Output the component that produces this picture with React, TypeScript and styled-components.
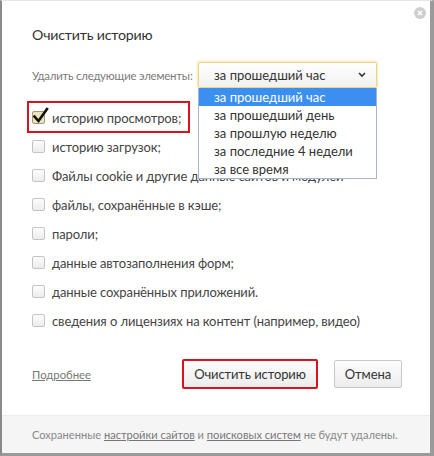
import React from "react";
import styled, { createGlobalStyle } from "styled-components";

const Global = createGlobalStyle`
  html, body { margin: 0; padding: 0; background: #fff; }
  body { font-family: Lato, "Open Sans", sans-serif; white-space: nowrap; }
  * { box-sizing: border-box; }
`;

const Window = styled.div`
  width: 434px;
  height: 456px;
  display: flex;
  flex-direction: column;
  background: #fff;
  border-left: 2px solid #8a8a8a;
  border-right: 4px solid #9a9a9a;
  border-bottom: 3px solid #9a9a9a;
  border-top: 1px solid #e6e6e6;
`;

const Content = styled.div`
  position: relative;
  flex: 1;
  padding: 24px 28px 0 30px;
  display: flex;
  flex-direction: column;
`;

const Close = styled.div`
  position: absolute;
  top: 6px;
  right: 4px;
  width: 12px;
  height: 12px;
  border-radius: 50%;
  background: #cfcfcf;
  display: flex;
  align-items: center;
  justify-content: center;
`;

const Title = styled.div`
  font-size: 14.2px;
  letter-spacing: -0.2px;
  line-height: 20px;
  color: #333;
`;

const SelectRow = styled.div`
  margin-top: 17px;
  display: flex;
  align-items: center;
  height: 26px;
`;

const Label = styled.div`
  font-size: 11.4px;
  letter-spacing: -0.2px;
  color: #7a7a7a;
  width: 166px;
`;

const SelectWrap = styled.div`
  position: relative;
  width: 179px;
  height: 26px;
`;

const SelectBox = styled.div`
  height: 26px;
  border: 1px solid #ecd58a;
  box-shadow: 0 0 2px 1px #f7e7b0;
  border-radius: 2px;
  background: linear-gradient(#ffffff, #f1f1f1);
  display: flex;
  align-items: center;
  justify-content: space-between;
  padding: 0 10px 0 15px;
  font-size: 13px;
  color: #333;
`;

const Dropdown = styled.ul`
  position: absolute;
  top: 26px;
  left: 0;
  width: 179px;
  margin: 0;
  padding: 0;
  list-style: none;
  background: #fff;
  border: 1px solid #a7b3cf;
  border-top: none;
  z-index: 2;
`;

const Option = styled.li<{ $active?: boolean }>`
  height: 18px;
  line-height: 18px;
  padding-left: 15px;
  font-size: 13px;
  color: ${(p) => (p.$active ? "#fff" : "#333")};
  background: ${(p) => (p.$active ? "#3b8ff0" : "transparent")};
`;

const List = styled.div`
  margin-top: 15px;
  display: flex;
  flex-direction: column;
`;

const Row = styled.label<{ $marked?: boolean }>`
  position: relative;
  height: 29px;
  display: flex;
  align-items: center;
  align-self: flex-start;
  gap: 7px;
  font-size: 13px;
  letter-spacing: -0.1px;
  color: #444;
  &::after {
    content: "";
    display: ${(p) => (p.$marked ? "block" : "none")};
    position: absolute;
    left: -5px;
    right: -9px;
    top: -2px;
    bottom: -1px;
    border: 2px solid #d8131c;
  }
`;

const Box = styled.span<{ $checked?: boolean }>`
  position: relative;
  width: 13px;
  height: 13px;
  flex: none;
  border: 1px solid ${(p) => (p.$checked ? "#a89a70" : "#c4c4c4")};
  border-radius: 2px;
  background: ${(p) =>
    p.$checked ? "#ece2bf" : "linear-gradient(#fdfdfd, #ececec)"};
  svg {
    position: absolute;
    left: -1px;
    top: -5px;
  }
`;

const Actions = styled.div`
  margin-top: 24px;
  display: flex;
  align-items: center;
  height: 30px;
`;

const More = styled.a`
  font-size: 11.3px;
  color: #777;
  text-decoration: underline;
  flex: 1;
`;

const Button = styled.button<{ $marked?: boolean }>`
  height: ${(p) => (p.$marked ? "30px" : "28px")};
  padding: 0 10px;
  font-family: inherit;
  font-size: 13px;
  letter-spacing: -0.1px;
  color: #333;
  background: linear-gradient(#fdfdfd, #ececec);
  border: ${(p) => (p.$marked ? "2px solid #d8131c" : "1px solid #c8c8c8")};
  border-radius: 2px;
  margin-left: ${(p) => (p.$marked ? "0" : "16px")};
`;

const Footer = styled.div`
  height: 38px;
  background: #f5f5f5;
  border-top: 1px solid #ececec;
  display: flex;
  align-items: center;
  padding-left: 30px;
  font-size: 11.1px;
  color: #888;
  a {
    color: #777;
    text-decoration: underline;
  }
`;

const Check = () => (
  <svg width="18" height="18" viewBox="0 0 18 18">
    <path
      d="M2.5 9.5 L6.5 14 L15 2"
      fill="none"
      stroke="#111"
      strokeWidth="2.6"
      strokeLinecap="square"
    />
  </svg>
);

const items = [
  "историю просмотров;",
  "историю загрузок;",
  "Файлы cookie и другие данные сайтов и модулей",
  "файлы, сохранённые в кэше;",
  "пароли;",
  "данные автозаполнения форм;",
  "данные сохранённых приложений.",
  "сведения о лицензиях на контент (например, видео)",
];

const options = [
  "за прошедший час",
  "за прошедший день",
  "за прошлую неделю",
  "за последние 4 недели",
  "за все время",
];

export default function App() {
  return (
    <>
      <Global />
      <Window>
        <Content>
          <Close>
            <svg width="6" height="6" viewBox="0 0 6 6">
              <path d="M1 1 L5 5 M5 1 L1 5" stroke="#fff" strokeWidth="1.5" />
            </svg>
          </Close>
          <Title>Очистить историю</Title>
          <SelectRow>
            <Label>Удалить следующие элементы:</Label>
            <SelectWrap>
              <SelectBox>
                <span>за прошедший час</span>
                <svg width="8" height="6" viewBox="0 0 8 6">
                  <path d="M1 1 L4 4 L7 1" fill="none" stroke="#333" strokeWidth="1.6" />
                </svg>
              </SelectBox>
              <Dropdown>
                {options.map((o, i) => (
                  <Option key={o} $active={i === 0}>
                    {o}
                  </Option>
                ))}
              </Dropdown>
            </SelectWrap>
          </SelectRow>
          <List>
            {items.map((t, i) => (
              <Row key={t} $marked={i === 0}>
                <Box $checked={i === 0}>{i === 0 && <Check />}</Box>
                <span>{t}</span>
              </Row>
            ))}
          </List>
          <Actions>
            <More>Подробнее</More>
            <Button $marked>Очистить историю</Button>
            <Button>Отмена</Button>
          </Actions>
        </Content>
        <Footer>
          Сохраненные&nbsp;<a>настройки сайтов</a>&nbsp;и&nbsp;<a>поисковых систем</a>
          &nbsp;не будут удалены.
        </Footer>
      </Window>
    </>
  );
}
